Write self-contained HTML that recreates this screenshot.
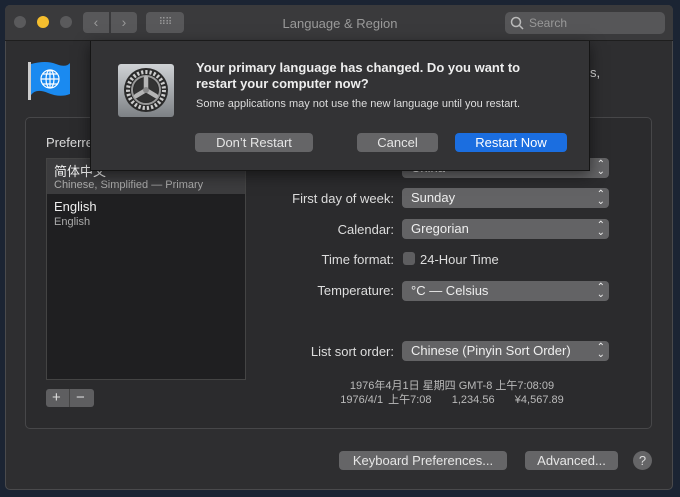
<!DOCTYPE html>
<html><head><style>
*{margin:0;padding:0;box-sizing:border-box}
body{width:680px;height:497px;background:#1b2433;font-family:"Liberation Sans","Noto Sans CJK SC",sans-serif;position:relative;overflow:hidden;color:#ddd}
.a{position:absolute}
.win{left:5px;top:5px;width:668px;height:485px;background:#2e2e30;border-radius:5px;border:1px solid #4a4a4c}
.tb{left:5px;top:5px;width:668px;height:36px;background:#3a3a3c;border-bottom:1px solid #1e1e1e;border-radius:5px 5px 0 0}
.dot{width:12px;height:12px;border-radius:50%;top:16px;background:#5a5a5c}
.btn{background:#656567;border-radius:4px;color:#e6e6e6;font-size:13px;text-align:center;line-height:19px;height:19px}
.pop{left:402px;width:207px;height:20px;background:#636365;border-radius:4px;font-size:13px;color:#eee;line-height:20px;padding-left:9px}
.pop:after{content:"⌃";position:absolute;right:4px;top:-3px;font-size:10px}
.pop:before{content:"⌄";position:absolute;right:4px;top:4px;font-size:10px}
.lbl{width:200px;left:194px;text-align:right;font-size:13px;color:#ddd}
</style></head><body>
<div class="a win"></div>
<div class="a tb"></div>
<div class="a dot" style="left:14px"></div>
<div class="a dot" style="left:37px;background:#f5be2e"></div>
<div class="a dot" style="left:60px"></div>
<div class="a" style="left:83px;top:12px;width:26px;height:21px;background:#58585a;border-radius:4px 0 0 4px;color:#999;font-size:14px;text-align:center;line-height:21px">&lsaquo;</div>
<div class="a" style="left:111px;top:12px;width:26px;height:21px;background:#58585a;border-radius:0 4px 4px 0;color:#999;font-size:14px;text-align:center;line-height:21px">&rsaquo;</div>
<div class="a" style="left:146px;top:12px;width:38px;height:21px;background:#58585a;border-radius:4px;color:#999;font-size:10px;text-align:center;line-height:21px;letter-spacing:-1px">⠿⠿</div>
<div class="a" style="left:240px;top:16px;width:200px;text-align:center;font-size:13px;color:#9a9a9a">Language &amp; Region</div>
<div class="a" style="left:505px;top:12px;width:160px;height:22px;background:#565658;border-radius:5px;font-size:12px;color:#999;line-height:22px;padding-left:24px">Search</div>
<svg class="a" style="left:510px;top:16px" width="14" height="14"><circle cx="6" cy="6" r="4.5" stroke="#bbb" stroke-width="1.5" fill="none"/><path d="M9.5 9.5L13 13" stroke="#bbb" stroke-width="1.5"/></svg>

<svg class="a" style="left:26px;top:60px" width="46" height="42"><rect x="2" y="2" width="3" height="38" fill="#ccc"/><path d="M5 4Q20 0 30 4T44 3V34Q34 38 22 33T5 35Z" fill="#1a8af0"/><g stroke="#fff" stroke-width="1.2" fill="none"><circle cx="24" cy="19" r="9"/><ellipse cx="24" cy="19" rx="4" ry="9"/><path d="M15 19H33M17 14H31M17 24H31M24 10V28"/></g></svg>
<div class="a" style="left:590px;top:65px;font-size:13px;color:#ddd">s,</div>

<div class="a" style="left:25px;top:117px;width:627px;height:312px;border:1px solid #474749;border-radius:5px;background:#2b2b2d"></div>
<div class="a" style="left:46px;top:135px;font-size:13px">Preferred</div>
<div class="a" style="left:46px;top:158px;width:200px;height:222px;background:#1f1f21;border:1px solid #444"></div>
<div class="a" style="left:47px;top:159px;width:198px;height:35px;background:#3c3c3e"></div>
<div class="a" style="left:54px;top:161px;font-size:13px;color:#eee">简体中文</div>
<div class="a" style="left:54px;top:179px;font-size:11px;color:#aaa">Chinese, Simplified — Primary</div>
<div class="a" style="left:54px;top:199px;font-size:13px;color:#eee">English</div>
<div class="a" style="left:54px;top:216px;font-size:11px;color:#aaa">English</div>
<div class="a" style="left:46px;top:389px;width:48px;height:18px;background:#5e5e60;border-radius:3px;color:#ddd;font-size:15px;line-height:17px"><span style="position:absolute;left:6px">+</span><span style="position:absolute;left:23px;top:0;width:1px;height:18px;background:#444"></span><span style="position:absolute;left:30px">−</span></div>

<div class="a pop" style="top:158px">China</div>
<div class="a lbl" style="top:191px">First day of week:</div><div class="a pop" style="top:188px">Sunday</div>
<div class="a lbl" style="top:222px">Calendar:</div><div class="a pop" style="top:219px">Gregorian</div>
<div class="a lbl" style="top:252px">Time format:</div>
<div class="a" style="left:403px;top:252px;width:12px;height:13px;background:#5e5e60;border-radius:3px"></div>
<div class="a" style="left:420px;top:252px;font-size:13px">24-Hour Time</div>
<div class="a lbl" style="top:283px">Temperature:</div><div class="a pop" style="top:281px">°C — Celsius</div>
<div class="a lbl" style="top:344px">List sort order:</div><div class="a pop" style="top:341px">Chinese (Pinyin Sort Order)</div>
<div class="a" style="left:302px;top:377px;width:300px;text-align:center;font-size:11px;color:#bbb">1976年4月1日 星期四 GMT-8 上午7:08:09</div>
<div class="a" style="left:302px;top:391px;width:300px;text-align:center;font-size:11px;color:#bbb;word-spacing:2px">1976/4/1 上午7:08 &nbsp;&nbsp; 1,234.56 &nbsp;&nbsp; ¥4,567.89</div>

<div class="a btn" style="left:339px;top:451px;width:168px">Keyboard Preferences...</div>
<div class="a btn" style="left:525px;top:451px;width:93px">Advanced...</div>
<div class="a" style="left:633px;top:451px;width:19px;height:19px;border-radius:50%;background:#656567;color:#ddd;font-size:13px;text-align:center;line-height:19px">?</div>

<div class="a" style="left:90px;top:41px;width:500px;height:130px;background:#333335;border:1px solid #151515;border-top:none;box-shadow:0 4px 14px rgba(0,0,0,.5)"></div>
<svg class="a" style="left:118px;top:64px" width="56" height="53"><defs><linearGradient id="g" x1="0" y1="0" x2="0" y2="1"><stop offset="0" stop-color="#cfd2d5"/><stop offset="1" stop-color="#7d8185"/></linearGradient></defs><rect x="0" y="0" width="56" height="53" rx="3" fill="url(#g)"/><circle cx="28" cy="26" r="22" fill="#2a2a2a"/><circle cx="28" cy="26" r="18" fill="none" stroke="#ccc" stroke-width="4" stroke-dasharray="2.2 2"/><circle cx="28" cy="26" r="14" fill="none" stroke="#999" stroke-width="2"/><circle cx="28" cy="26" r="12" fill="#333"/><g stroke="#b5b5b5" stroke-width="4.5" stroke-linecap="round"><path d="M28 26L28 14M28 26L18 32M28 26L38 32"/></g><circle cx="28" cy="26" r="3" fill="#888"/></svg>
<div class="a" style="left:196px;top:60px;font-size:13px;font-weight:bold;color:#eee;line-height:16px">Your primary language has changed. Do you want to<br>restart your computer now?</div>
<div class="a" style="left:196px;top:98px;font-size:11px;color:#ddd">Some applications may not use the new language until you restart.</div>
<div class="a btn" style="left:195px;top:133px;width:118px">Don’t Restart</div>
<div class="a btn" style="left:357px;top:133px;width:81px">Cancel</div>
<div class="a btn" style="left:455px;top:133px;width:112px;background:#1b6ee0;color:#fff">Restart Now</div>
</body></html>
